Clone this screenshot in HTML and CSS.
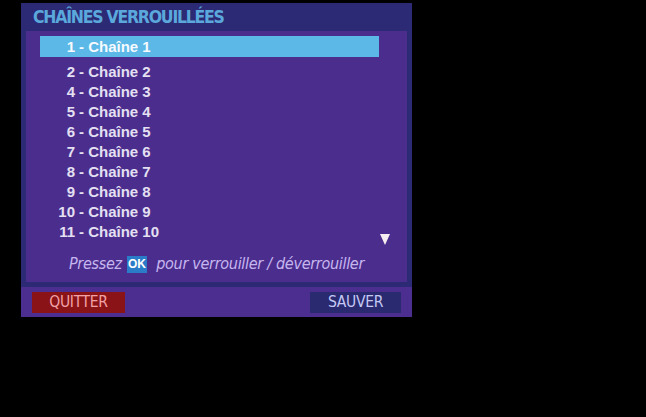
FILE: index.html
```html
<!DOCTYPE html>
<html lang="fr">
<head>
<meta charset="utf-8">
<title>Chaînes verrouillées</title>
<link rel="stylesheet" href="styles.css">
</head>
<body>
<div class="screen">
  <div class="panel">
    <div class="title">CHAÎNES VERROUILLÉES</div>
    <div class="content">
      <ul class="list">
        <li class="item sel"><span class="num">1</span><span class="name">- Chaîne 1</span></li>
        <li class="item"><span class="num">2</span><span class="name">- Chaîne 2</span></li>
        <li class="item"><span class="num">4</span><span class="name">- Chaîne 3</span></li>
        <li class="item"><span class="num">5</span><span class="name">- Chaîne 4</span></li>
        <li class="item"><span class="num">6</span><span class="name">- Chaîne 5</span></li>
        <li class="item"><span class="num">7</span><span class="name">- Chaîne 6</span></li>
        <li class="item"><span class="num">8</span><span class="name">- Chaîne 7</span></li>
        <li class="item"><span class="num">9</span><span class="name">- Chaîne 8</span></li>
        <li class="item"><span class="num">10</span><span class="name">- Chaîne 9</span></li>
        <li class="item"><span class="num">11</span><span class="name">- Chaîne 10</span></li>
      </ul>
      <span class="arrow"></span>
      <p class="hint">Pressez <span class="ok">OK</span> pour verrouiller / déverrouiller</p>
    </div>
    <div class="footer">
      <button class="btn quit">QUITTER</button>
      <button class="btn save">SAUVER</button>
    </div>
  </div>
</div>
</body>
</html>
```
FILE: styles.css
```css
html, body {
  margin: 0;
  padding: 0;
  background: #000;
}
.screen {
  width: 646px;
  height: 417px;
  background: #000;
  overflow: hidden;
  padding-top: 3px;
  box-sizing: border-box;
}
.panel {
  margin-left: 21px;
  width: 391px;
  height: 314px;
  background: #2c2a74;
  display: flex;
  flex-direction: column;
}
.title {
  height: 28px;
  line-height: 29px;
  padding-left: 12px;
  color: #5aa8dc;
  font-family: "Liberation Sans Narrow", "DejaVu Sans Condensed", sans-serif;
  font-weight: bold;
  font-size: 17.5px;
  letter-spacing: -1.25px;
}
.content {
  position: relative;
  flex: 1;
  margin: 0 5px;
  padding-top: 5px;
  background: #4b2d8e;
}
.list {
  list-style: none;
  margin: 0;
  padding: 0 0 0 14px;
  font-family: "Liberation Sans", Arial, sans-serif;
  font-weight: bold;
  font-size: 15px;
  color: #e4e0f2;
}
.item {
  display: grid;
  grid-template-columns: 35px auto;
  width: 339px;
  height: 20px;
  line-height: 20px;
}
.item.sel {
  height: 21px;
  line-height: 21px;
  margin-bottom: 5px;
  background: #5cb8e6;
  color: #f6faff;
}
.num {
  text-align: right;
}
.name {
  padding-left: 4px;
}
.arrow {
  position: absolute;
  left: 354px;
  top: 203px;
  width: 0;
  height: 0;
  border-left: 5.5px solid transparent;
  border-right: 5.5px solid transparent;
  border-top: 11px solid #f6eef0;
}
.hint {
  margin: 12px 0 0;
  height: 20px;
  line-height: 20px;
  text-align: center;
  font-family: "Liberation Sans Narrow", "DejaVu Sans Condensed", sans-serif;
  font-style: italic;
  font-size: 16px;
  letter-spacing: -0.3px;
  color: #c6b6ee;
}
.ok {
  display: inline-block;
  width: 20px;
  height: 17px;
  line-height: 17px;
  margin: 0 5px 0 1px;
  vertical-align: 1px;
  background: #2a7cc8;
  color: #fff;
  font-style: normal;
  font-weight: bold;
  font-size: 12px;
  letter-spacing: 0;
  font-family: "Liberation Sans", Arial, sans-serif;
}
.footer {
  margin-top: 5px;
  height: 30px;
  background: #4b2e90;
  display: flex;
  justify-content: space-between;
  padding: 5px 11px 0;
  box-sizing: border-box;
}
.btn {
  height: 21px;
  border: 0;
  padding: 0;
  font-family: "Liberation Sans Narrow", "DejaVu Sans Condensed", sans-serif;
  font-size: 15.5px;
  letter-spacing: -0.3px;
  line-height: 21px;
}
.quit {
  width: 93px;
  background: #8a1318;
  color: #f2a2a6;
}
.save {
  width: 91px;
  background: #2a2a70;
  color: #c4c8f4;
}
```
